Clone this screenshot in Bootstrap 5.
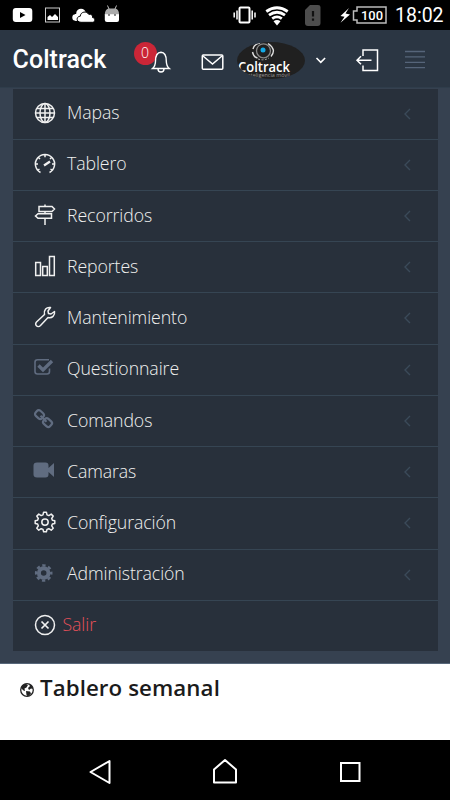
<!DOCTYPE html>
<html lang="es">
<head>
<meta charset="utf-8">
<meta name="viewport" content="width=device-width, initial-scale=1">
<title>Coltrack</title>
<link href="https://cdn.jsdelivr.net/npm/bootstrap@5.3.0/dist/css/bootstrap.min.css" rel="stylesheet">
<style>
body{width:450px;height:800px;overflow:hidden;font-family:"Open Sans",sans-serif;background:#fff}
svg{display:block;flex:none;fill:none;stroke:currentColor;overflow:visible}
.solid{stroke:none}
.status{height:30px;padding-left:12px;padding-right:10px;font-family:Roboto,sans-serif}
.clock{font-size:19.5px;line-height:30px;width:45px;padding-top:2px;white-space:nowrap}
.topbar{height:58px;background:#2b3643;padding-left:12.5px;border-bottom:1px solid #2f3d4b}
.brand{font:500 25px/58px Roboto,sans-serif;width:121px;padding-top:2px;letter-spacing:.08px}
.alert-area{width:38px;height:58px}
.count{left:0;top:12px;width:23px;height:23px;background:#cb2637;font-size:14px;font-weight:300;line-height:21px}
.bell{left:17.500px;top:21px}
.bars{color:#56657a}
.side{height:576px;background:#364150;padding:1px 12.5px 0;border-bottom:1px solid #57677a}
.menu{background:#28303b;color:#f0f0f0}
.entry{height:51.25px;border-bottom:1px solid #364553;padding:0 24.5px 2px 21.5px;gap:11px;font-size:17.7px;font-weight:300;letter-spacing:-.08px}
.entry:first-child{height:50.5px}
.entry:last-child{border-bottom:0;height:50px}
.dim{color:#606c80}
.arrow{color:#3b4a59;margin-top:2px}
.exit-label{color:#e7505a;margin-left:-4.5px}
.board{height:76px;padding:10px 20px}
.board h1{font-size:22.300px;line-height:28px;font-weight:600;color:#1b1b1b;letter-spacing:.08px}
.board svg{margin-right:6px}
.softkeys{height:60px;padding:3px 88px 0}
</style>
<script src="https://cdn.jsdelivr.net/npm/bootstrap@5.3.0/dist/js/bootstrap.bundle.min.js"></script>
</head>
<body class="d-flex flex-column">
<div class="status bg-black text-white d-flex align-items-center">
  <svg width="21" height="30"><rect x=".8" y="8" width="19.5" height="14" rx="3" fill="#fff" stroke="none"/><path d="M8 12v6l5.500-3z" fill="#000" stroke="none"/></svg>
  <svg class="ms-2 me-2" width="25" height="30" stroke-width="1"><rect x="4.500" y="8" width="14" height="14" stroke="#ccc"/><path d="M6.500 20v-3l2.500-2 2 2 3-3 3 3v3z" fill="#fff" stroke="none"/></svg>
  <svg class="solid me-2" width="22" height="30"><g fill="#fff"><circle cx="1.500" cy="17.500" r="3.200"/><circle cx="7" cy="13.500" r="4.800"/><path d="M1 14h9v6.700H1z"/></g><path fill="#fff" stroke="#000" stroke-width="1" d="M7 22.300c-5 0-5-6-.8-6 .5-5 6.500-5.500 8.500-2 3-.5 4.300 1.200 3.800 3.200 3.200.5 3 4.800 0 4.800z"/></svg>
  <svg class="solid" width="18" height="30"><path fill="#fff" d="M.8 14h14.200v6q0 2-2 2H3q-2.200 0-2.200-2z"/><path fill="#aaa" d="M.8 14.200Q1 9 5 8.500h6q4 .5 4 5.700z"/><path stroke="#bbb" d="M5 9 3.500 5.500M11 9l1.500-3.500"/><circle cx="5" cy="15" r=".8" fill="#000"/><circle cx="11" cy="15" r=".8" fill="#000"/></svg>
  <svg class="ms-auto" width="22" height="30" stroke-width="1.500"><rect x="6.500" y="7.500" width="10" height="15" rx="1" stroke-width="2"/><path d="M4 10.500v9M1.200 12.500v5M19.200 10.500v9M22 12.500v5"/></svg>
  <svg class="ms-2" width="26" height="30" stroke-width="2.800"><path d="M3.300 11.500q10.700-7.500 21.400 0M6 15.200q8-5.800 16 0M9.200 18.700q4.800-3.600 9.600 0"/><path fill="#fff" stroke="none" d="M10.500 21.200q3.500-2.600 7 0L14 25.500z"/></svg>
  <svg class="solid ms-3" width="16" height="30"><path fill="#4d4d4d" d="M5 5h8q2.500 0 2.500 2v16q0 3-3 3H3q-3 0-3-3V10z"/><path stroke="#111" stroke-width="2.200" d="M8 11v5.500M8 18.500v2.200"/></svg>
  <svg class="ms-3" width="50" height="30"><path fill="#fff" stroke="none" d="m12 8-8.500 8 4 .8-4 6L13 14.500l-4.500-1z"/><path stroke="#bbb" stroke-width="1.500" d="M20 7h29v16H20v-3h-3.500v-9H20z"/><text x="35" y="20" text-anchor="middle" font-size="13.500" font-weight="500" fill="#fff" stroke="none" textLength="22" lengthAdjust="spacingAndGlyphs">100</text></svg>
  <span class="clock ms-2">18:02</span>
</div>

<header class="topbar text-white d-flex align-items-center">
  <span class="brand">Coltrack</span>
  <div class="alert-area position-relative">
    <span class="count position-absolute rounded-circle text-center">0</span>
    <svg class="bell position-absolute" width="20" height="24" stroke-width="1.400"><path d="M1.500 17.500q3-2.500 3-7.500Q4.500 1.500 10 1.200q5.300.3 5.300 8.800 0 5 3 7.500zM7 18q0 3 3 3t3-3"/></svg>
  </div>
  <svg class="ms-4" width="33.500" height="58" stroke-width="1.500"><rect x="6.300" y="25" width="20.500" height="14.300" rx="1"/><path d="m7 26 9.500 8 9.500-8"/></svg>
  <svg class="ms-2 mt-1" width="68" height="38"><defs><clipPath id="oval"><ellipse cx="34" cy="18.500" rx="34" ry="18.500"/></clipPath></defs><g clip-path="url(#oval)"><path fill="#202020" stroke="none" d="M0 0h68v38H0z"/><circle cx="26.500" cy="8.800" r="7" stroke="#888" stroke-width="1.300"/><path stroke="#ddd" stroke-width="1.400" d="M31 1.500q9 6 3 13M15.500 10q1 5 5 6M16 7q1-5 7-6"/><path stroke="#aaa" stroke-dasharray="2 1.500" d="M21 17q6 2 11-1"/><circle cx="26" cy="8" r="2.500" fill="#13a9e6" stroke="none"/><text x="1" y="29.500" fill="#fff" stroke="none" font-family="Open Sans" font-weight="600" font-size="14" textLength="52" lengthAdjust="spacingAndGlyphs">Coltrack</text><text x="9" y="35" fill="#999" stroke="none" font-family="Open Sans" font-size="6" textLength="44" lengthAdjust="spacingAndGlyphs">inteligencia móvil</text></g></svg>
  <svg class="ms-2" width="16" height="10" stroke-width="1.600"><path d="m3.500 4 4.300 4.300L12.100 4"/></svg>
  <svg class="ms-4" width="30" height="26" stroke-width="1.500"><path d="M10 10V4h14.500v20.500H10v-5M4 14.300h14.500M8 10.300l-4 4 4 4"/></svg>
  <svg class="bars" width="36" height="20" stroke-width="1.300"><path d="M22 2.500h20M22 7.900h20M22 13.300h20M22 18.700h20"/></svg>
</header>

<section class="side">
  <nav class="menu d-flex flex-column">
    <div class="entry d-flex align-items-center"><svg width="22" height="22" viewBox="0 0 22 22" stroke-width="1.500"><circle cx="11" cy="11" r="9.500"/><ellipse cx="11" cy="11" rx="5" ry="9.500"/><path d="M11 1.500v19M1.500 11h19M3 6.500h16M3 15.500h16"/></svg><span class="flex-grow-1">Mapas</span><svg class="arrow" width="12" height="12" stroke-width="1.400"><path d="M9 1 4 6l5 5"/></svg></div>
    <div class="entry d-flex align-items-center"><svg width="22" height="22" viewBox="0 0 22 22" stroke-width="1.500"><path d="M6.500 19.500a9.600 9.600 0 1 1 9 0M11 2v2.200M4.500 4.500 6 6M17.500 4.500 16 6M2 11h2M18 11h2M4 17l1.500-1M18 17l-1.500-1"/><path stroke-width="2.200" d="m10 12.500 6-4"/></svg><span class="flex-grow-1">Tablero</span><svg class="arrow" width="12" height="12" stroke-width="1.400"><path d="M9 1 4 6l5 5"/></svg></div>
    <div class="entry d-flex align-items-center"><svg width="22" height="22" viewBox="0 0 22 22" stroke-width="1.500"><path d="M5 2.500h13l2.500 2.500L18 7.500H5zM17.500 9.700H4L1.500 12 4 14.300h13.500zM11 .5v2M11 7.500v2M11 14.500V21"/></svg><span class="flex-grow-1">Recorridos</span><svg class="arrow" width="12" height="12" stroke-width="1.400"><path d="M9 1 4 6l5 5"/></svg></div>
    <div class="entry d-flex align-items-center"><svg width="22" height="22" viewBox="0 0 22 22" stroke-width="1.500"><path d="M1.700 7.500h4.800v13H1.700zM8.700 11.500h4.600v9H8.700zM15.500 1.500h4.800v19h-4.800z"/></svg><span class="flex-grow-1">Reportes</span><svg class="arrow" width="12" height="12" stroke-width="1.400"><path d="M9 1 4 6l5 5"/></svg></div>
    <div class="entry d-flex align-items-center"><svg width="22" height="22" viewBox="0 0 22 22" stroke-width="1.500" stroke-linejoin="round"><path d="M16.500 1.500 14 5l.5 2.500 2.500.5 3.500-2.500c.8 4-2.500 7-6.500 6l-7.500 8c-3 3-6.500-1-4-3.500L10.500 8.500C9.500 4 12.500.8 16.500 1.500z"/></svg><span class="flex-grow-1">Mantenimiento</span><svg class="arrow" width="12" height="12" stroke-width="1.400"><path d="M9 1 4 6l5 5"/></svg></div>
    <div class="entry d-flex align-items-center"><svg class="dim" width="22" height="22" viewBox="0 0 22 22" stroke-width="1.600"><path d="M15 1.700H3.500Q1 1.700 1 4.200v9.300Q1 16 3.500 16h9.500q2.500 0 2.500-2.500v-3"/><path stroke-width="3.300" d="m4.500 7.500 4.500 4.500L18 3"/></svg><span class="flex-grow-1">Questionnaire</span><svg class="arrow" width="12" height="12" stroke-width="1.400"><path d="M9 1 4 6l5 5"/></svg></div>
    <div class="entry d-flex align-items-center"><svg class="dim" width="22" height="22" viewBox="0 0 22 22" stroke-width="2.200"><rect x="1.200" y="2.200" width="8.500" height="6.800" rx="2.400" transform="rotate(42 5.500 5.600)"/><rect x="9.300" y="10.200" width="8.500" height="6.800" rx="2.400" transform="rotate(42 13.500 13.600)"/><path d="m6.500 6.800 6 6"/></svg><span class="flex-grow-1">Comandos</span><svg class="arrow" width="12" height="12" stroke-width="1.400"><path d="M9 1 4 6l5 5"/></svg></div>
    <div class="entry d-flex align-items-center"><svg class="dim" width="22" height="22" viewBox="0 0 22 22"><path fill="currentColor" stroke="none" d="M3 2.500h8.500q3 0 3 3V8L20 3v14l-5.500-5v2.500q0 3-3 3H3q-3.500 0-3.500-3v-9q0-3 3.500-3z"/></svg><span class="flex-grow-1">Camaras</span><svg class="arrow" width="12" height="12" stroke-width="1.400"><path d="M9 1 4 6l5 5"/></svg></div>
    <div class="entry d-flex align-items-center"><svg width="22" height="22" viewBox="0 0 22 22" stroke-width="1.500" stroke-linejoin="round"><path d="M9.600 1.200h2.800l.6 2.700 1.800.7 2.400-1.500 2 2-1.500 2.400.7 1.800 2.400.5v2.600l-2.400.6-.7 1.800 1.500 2.400-2 2-2.400-1.500-1.800.7-.6 2.400H9.600L9 18.400l-1.800-.7-2.400 1.500-2-2 1.500-2.400L3.600 13l-2.400-.6V9.800l2.400-.5.700-1.800-1.500-2.400 2-2 2.400 1.500L9 3.900z"/><circle cx="11" cy="11.100" r="3.200"/></svg><span class="flex-grow-1">Configuración</span><svg class="arrow" width="12" height="12" stroke-width="1.400"><path d="M9 1 4 6l5 5"/></svg></div>
    <div class="entry d-flex align-items-center"><svg class="dim" width="22" height="22" viewBox="0 0 22 22"><circle cx="9.700" cy="10" r="4.800" stroke-width="4"/><circle cx="9.700" cy="10" r="7.600" stroke-width="2.400" stroke-dasharray="3.300 2.669" stroke-dashoffset="1.650"/></svg><span class="flex-grow-1">Administración</span><svg class="arrow" width="12" height="12" stroke-width="1.400"><path d="M9 1 4 6l5 5"/></svg></div>
    <div class="entry d-flex align-items-center"><svg width="22" height="22" viewBox="0 0 22 22" stroke-width="1.500"><circle cx="11" cy="11" r="9.500"/><path stroke-width="1.700" d="m7.500 7.500 7 7m0-7-7 7"/></svg><span class="exit-label">Salir</span></div>
  </nav>
</section>

<main class="board">
  <h1 class="d-flex align-items-center m-0"><svg width="14" height="14" class="mt-1" viewBox="0 0 14 14"><circle cx="7" cy="7" r="6.300" fill="#fff" stroke="#222" stroke-width="1.300"/><path fill="#222" stroke="none" d="M1 5q1-3 4.500-4.300L8 2 6.500 4.500l-2 1L5 8 3.500 7.500zM8.500 1q4 1 4.500 5l-2-.5-2 1.500-1-2 2-2zM6 8l4 .5 1 2L8 13.500 6.500 12z"/></svg><span>Tablero semanal</span></h1>
</main>

<footer class="softkeys bg-black text-white d-flex align-items-center justify-content-between">
  <svg width="24" height="26" stroke-width="2" stroke-linejoin="round"><path d="M21.500 2v22L2.500 13z"/></svg>
  <svg width="26" height="26" stroke-width="2" stroke-linejoin="round"><path d="M2 23.500V10.500L13 1l11 9.500v13z"/></svg>
  <svg width="24" height="26" stroke-width="2"><rect x="3" y="4" width="18.500" height="18"/></svg>
</footer>
</body>
</html>
